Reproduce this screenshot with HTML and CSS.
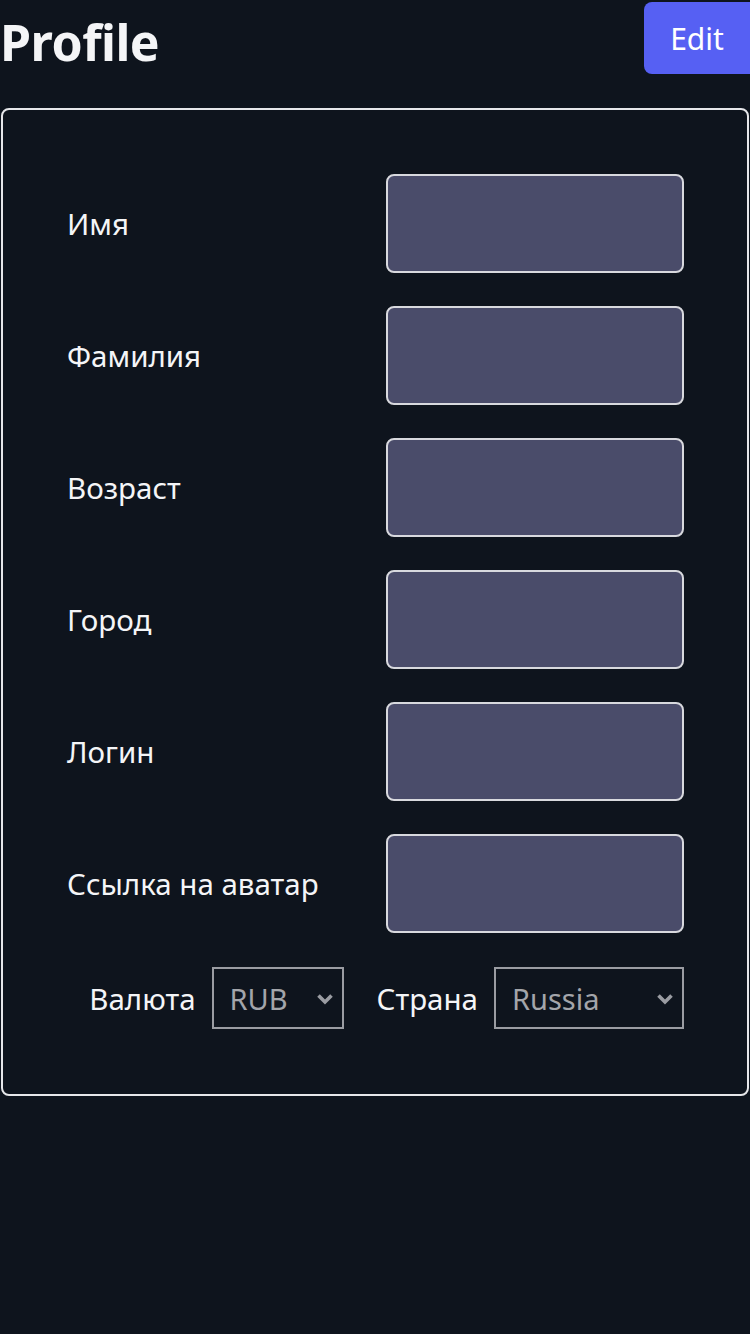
FILE: index.html
```html
<!DOCTYPE html>
<html lang="ru">
<head>
<meta charset="utf-8">
<title>Profile</title>
<link rel="stylesheet" href="styles.css">
</head>
<body>
<div class="page">
  <header class="header">
    <h1 class="title">Profile</h1>
    <button class="edit-btn">Edit</button>
  </header>
  <div class="card">
    <div class="row"><label class="label">Имя</label><input class="input" type="text"></div>
    <div class="row"><label class="label">Фамилия</label><input class="input" type="text"></div>
    <div class="row"><label class="label">Возраст</label><input class="input" type="text"></div>
    <div class="row"><label class="label">Город</label><input class="input" type="text"></div>
    <div class="row"><label class="label">Логин</label><input class="input" type="text"></div>
    <div class="row"><label class="label">Ссылка на аватар</label><input class="input" type="text"></div>
    <div class="selects">
      <div class="sel-group">
        <span class="sel-label">Валюта</span>
        <div class="select select-cur"><span>RUB</span><svg class="chev" width="18" height="12" viewBox="0 0 18 12"><path d="M2.5 2.5 L9 9 L15.5 2.5" fill="none" stroke="#9a9ca2" stroke-width="3.6"/></svg></div>
      </div>
      <div class="sel-group">
        <span class="sel-label">Страна</span>
        <div class="select select-country"><span>Russia</span><svg class="chev" width="18" height="12" viewBox="0 0 18 12"><path d="M2.5 2.5 L9 9 L15.5 2.5" fill="none" stroke="#9a9ca2" stroke-width="3.6"/></svg></div>
      </div>
    </div>
  </div>
</div>
</body>
</html>
```

FILE: styles.css
```css
html, body {
  margin: 0;
  padding: 0;
  background: #0e141d;
  height: 100%;
}
body {
  font-family: "Noto Sans", "Open Sans", sans-serif;
  color: #f4f5f7;
}
.page {
  display: flex;
  flex-direction: column;
}
.header {
  display: flex;
  justify-content: space-between;
  align-items: flex-start;
  height: 108px;
}
.title {
  margin: 8px 0 0 0;
  font-size: 50px;
  font-weight: 700;
  line-height: 68px;
  letter-spacing: -0.5px;
  color: #f4f5f7;
}
.edit-btn {
  margin-top: 2px;
  width: 106px;
  height: 72px;
  border: none;
  border-radius: 8px 0 0 8px;
  background: #5660f3;
  color: #ffffff;
  font-family: "Noto Sans", sans-serif;
  font-size: 30px;
  padding: 0;
}
.card {
  margin: 0 1px;
  border: 2px solid #e6e7ea;
  border-radius: 8px;
  padding: 64px 63px 65px 64px;
  display: flex;
  flex-direction: column;
  gap: 33px;
}
.row {
  display: flex;
  justify-content: space-between;
  align-items: center;
}
.label {
  font-size: 29.5px;
  color: #f4f5f7;
}
.input {
  box-sizing: border-box;
  width: 298px;
  height: 99px;
  background: #4a4c6a;
  border: 2px solid #d8d9de;
  border-radius: 8px;
  outline: none;
}
.selects {
  display: flex;
  justify-content: flex-end;
  gap: 33px;
  margin-top: 1px;
}
.sel-group {
  display: flex;
  align-items: center;
  gap: 16px;
}
.sel-label {
  font-size: 29.5px;
  color: #f4f5f7;
}
.select {
  box-sizing: border-box;
  height: 62px;
  border: 2px solid #9a9ca2;
  display: flex;
  align-items: center;
  justify-content: space-between;
  padding: 0 8px 0 16px;
  color: #a3a5aa;
  font-size: 29px;
}
.select-cur { width: 132px; }
.select-country { width: 190px; }
.chev { display: block; margin-top: 2px; }
```
